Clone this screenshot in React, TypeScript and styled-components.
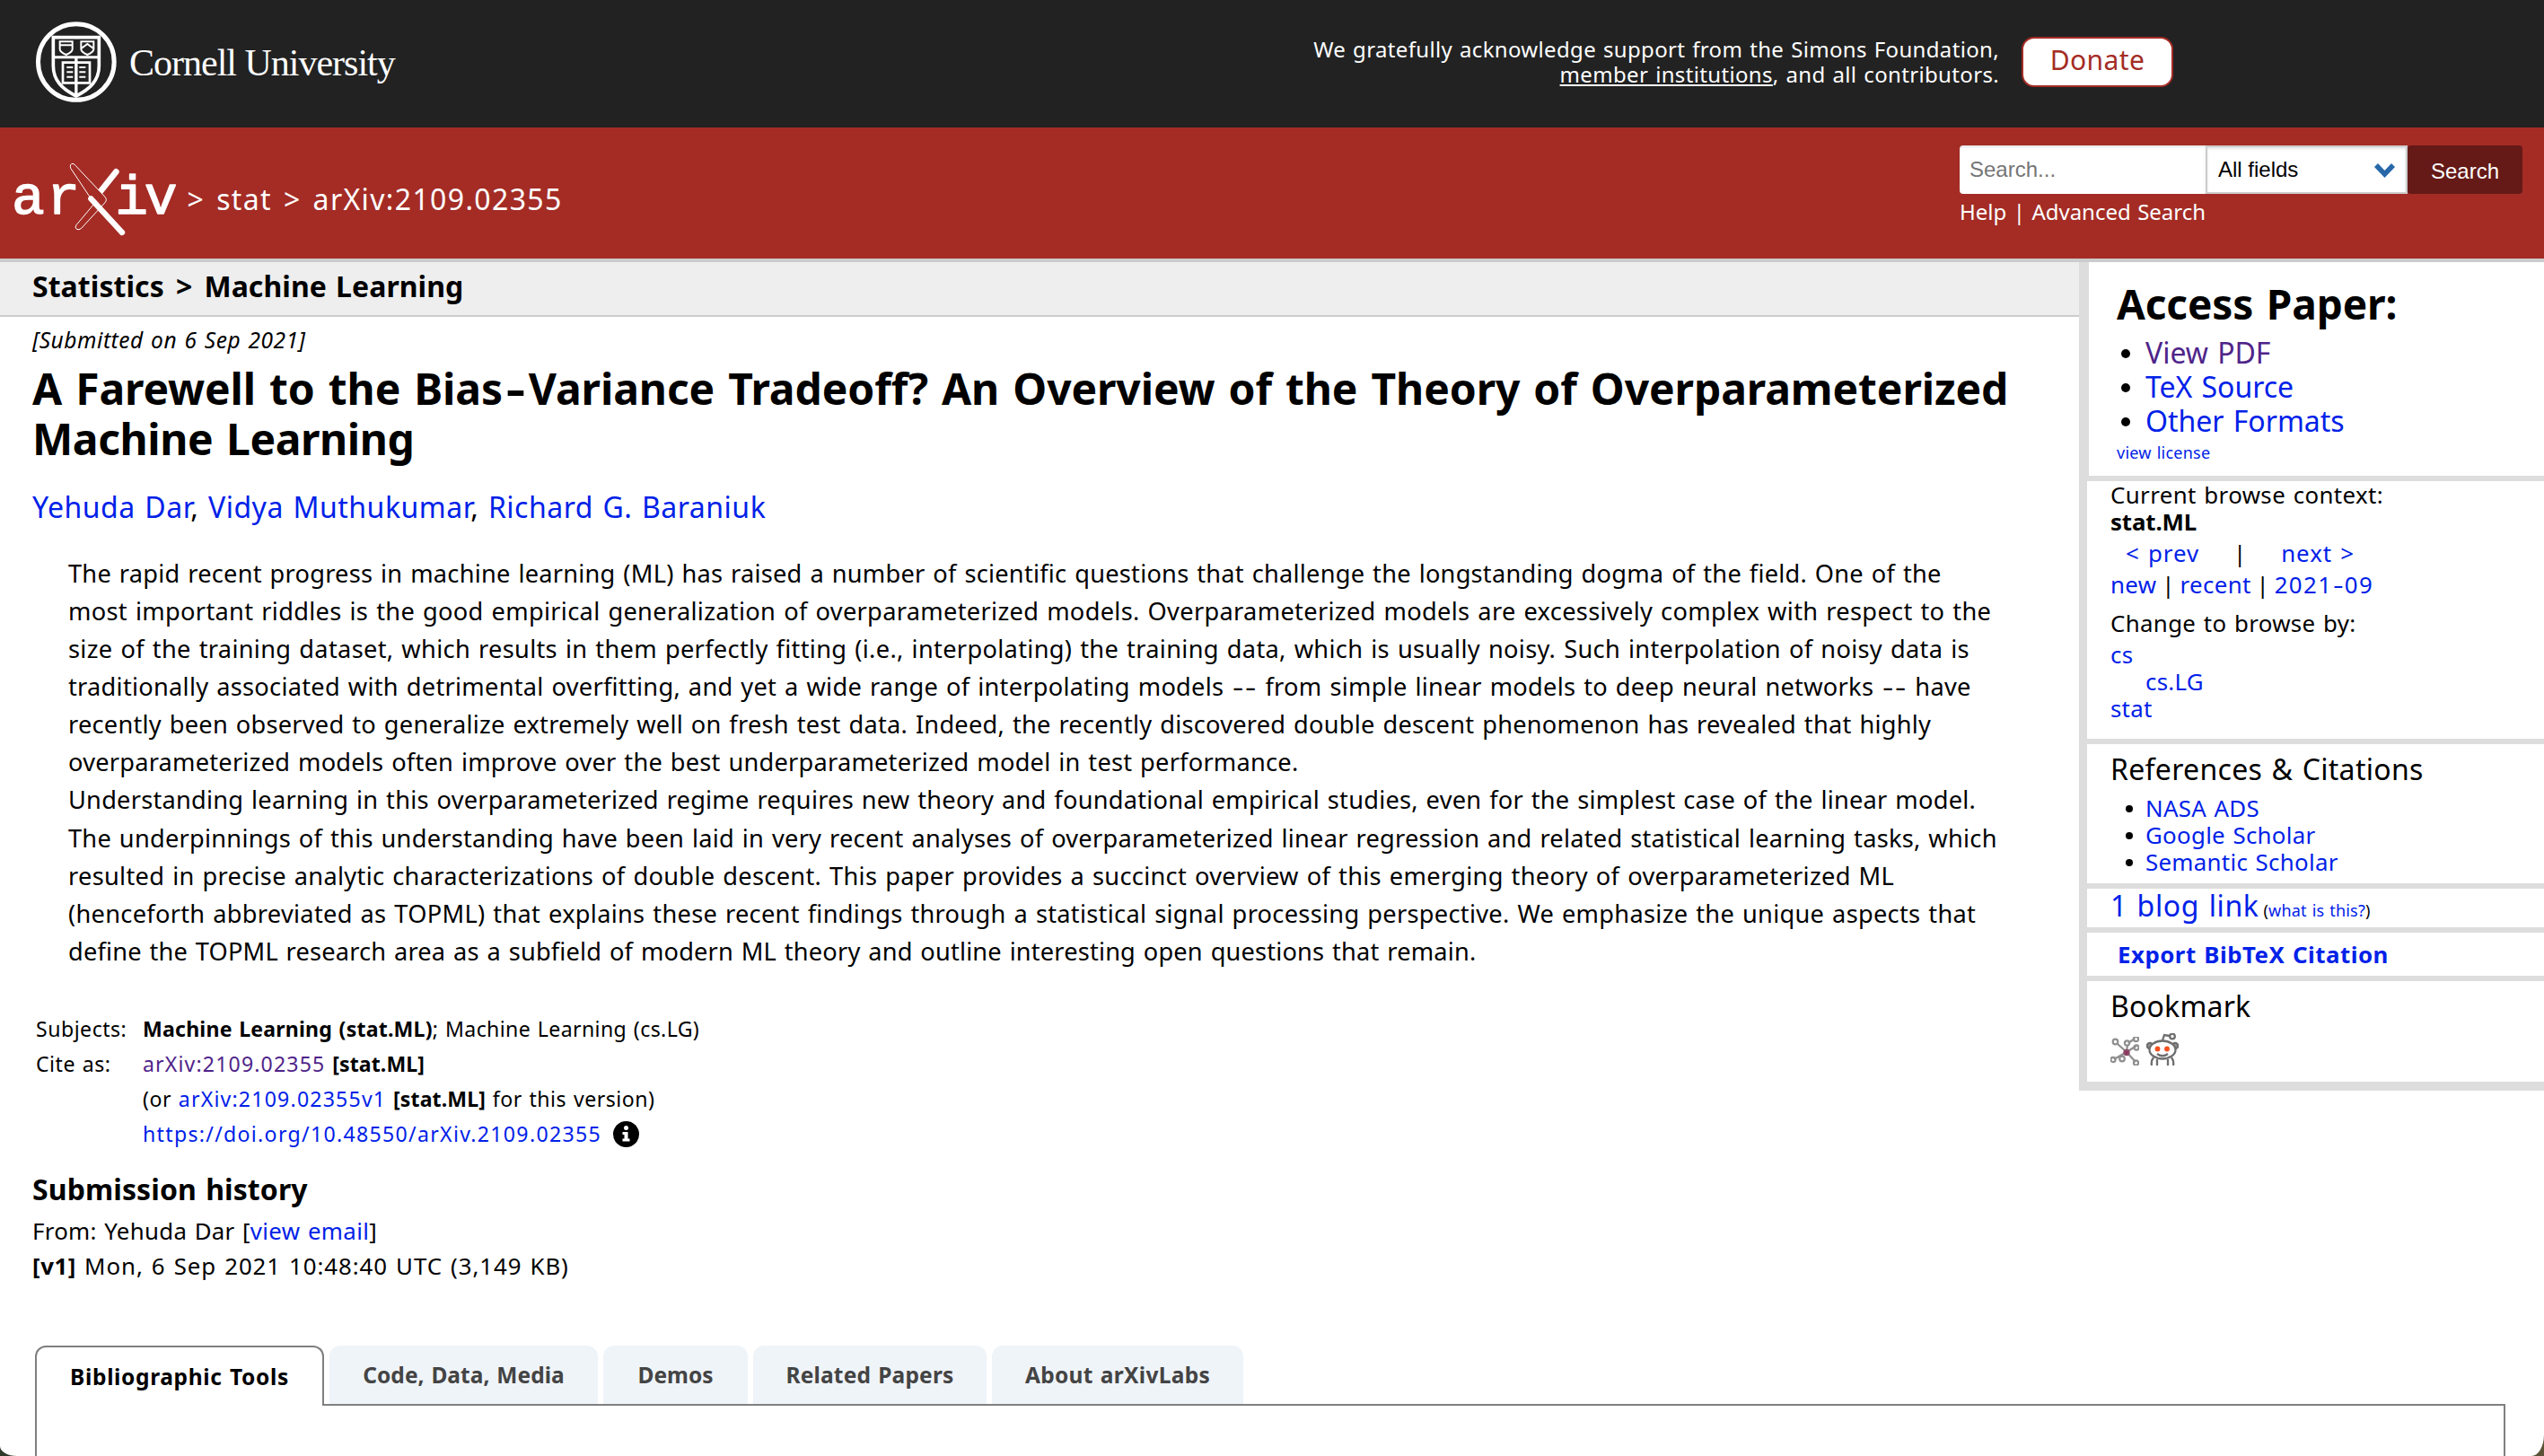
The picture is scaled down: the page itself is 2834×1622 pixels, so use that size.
import React, { Fragment } from "react";
import styled, { createGlobalStyle, css } from "styled-components";

const SANS = '"Noto Sans", "Open Sans", sans-serif';
const HELV = '"Liberation Sans", Arial, sans-serif';
const LINK = "#0021e8";
const VISITED = "#4f2489";
const RED = "#a42c25";

const GlobalStyle = createGlobalStyle`
  html, body { margin: 0; padding: 0; }
  body {
    overflow: hidden;
    background: linear-gradient(90deg, #2f3a2b 0 50%, #5b5238 50% 100%);
  }
  *, *::before, *::after { box-sizing: border-box; }
  :where(#root *) { word-spacing: 0.056em; }
`;

const Page = styled.div`
  width: 2834px;
  height: 1622px;
  overflow: hidden;
  display: flex;
  flex-direction: column;
  background: #fff;
  color: #000;
  font-family: ${SANS};
  border-bottom-left-radius: 19px 11px;
  border-bottom-right-radius: 14px 24px;
`;

interface TextProps {
  $ls?: number;
}
const tracking = css<TextProps>`
  letter-spacing: ${(p) => p.$ls ?? 0.25}px;
`;

const Link = styled.a<TextProps & { $visited?: boolean }>`
  color: ${(p) => (p.$visited ? VISITED : LINK)};
  text-decoration: none;
  ${(p) => p.$ls !== undefined && tracking}
`;

const Run = styled.span<TextProps>`
  ${tracking}
`;

const Strong = styled.b<TextProps>`
  font-weight: 700;
  ${tracking}
`;

const WideHyphen = styled.span<{ $pad: number }>`
  display: inline-block;
  padding: 0 ${(p) => p.$pad}em;
  letter-spacing: 0;
  transform: scaleX(1.4);
`;

const Dashed = ({ text, pad = 0.1 }: { text: string; pad?: number }) => (
  <>
    {text.split("-").map((part, i) => (
      <Fragment key={i}>
        {i > 0 && <WideHyphen $pad={pad}>-</WideHyphen>}
        {part}
      </Fragment>
    ))}
  </>
);

/* ---------- Cornell header ---------- */

const CornellBar = styled.header`
  flex: none;
  height: 142px;
  padding: 10px 413px 0 20px;
  display: flex;
  justify-content: space-between;
  background: #222;
  color: #fff;
`;

const CornellBrand = styled.div`
  display: flex;
  gap: 4px;
`;

const CornellName = styled.div`
  padding-top: 36px;
  font: 400 42px/48px "Liberation Serif", "Times New Roman", serif;
  letter-spacing: -1px;
  word-spacing: 0;
  white-space: nowrap;
`;

const Support = styled.div`
  display: flex;
  gap: 25px;
  padding-top: 31px;
`;

const SupportText = styled.div`
  text-align: right;
  font-size: 24px;
  line-height: 28px;
  letter-spacing: 0.34px;
  a {
    color: #fff;
    text-decoration: underline;
    text-decoration-thickness: 2px;
    text-underline-offset: 2px;
    text-decoration-skip-ink: none;
  }
`;

const Donate = styled.a`
  width: 169px;
  height: 56px;
  border: 2px solid ${RED};
  border-radius: 14px;
  background: #fff;
  color: ${RED};
  text-align: center;
  font-size: 30px;
  line-height: 47px;
  letter-spacing: 0.4px;
`;

/* ---------- arXiv header ---------- */

const ArxivBar = styled.div`
  flex: none;
  height: 150px;
  padding: 20px 24px 0 0;
  display: flex;
  justify-content: space-between;
  background: ${RED};
  border-bottom: 4px solid #cbcbcb;
  color: #fff;
`;

const Brand = styled.div`
  display: flex;
  gap: 7px;
  padding-top: 8px;
`;

const BrandPath = styled.div`
  padding-top: 33px;
  font-size: 32px;
  line-height: 38px;
  white-space: pre;
  letter-spacing: 1.36px;
`;

const Angle = styled.span<{ $gap: number }>`
  padding: 0 ${(p) => p.$gap}px;
`;

const SearchArea = styled.div`
  width: 627px;
  display: flex;
  flex-direction: column;
  gap: 6px;
`;

const SearchRow = styled.div`
  display: flex;
  height: 54px;
`;

const SearchInput = styled.input`
  width: 274px;
  height: 54px;
  border: 0;
  border-radius: 4px 0 0 4px;
  padding: 0 11px;
  background: #fff;
  box-shadow: inset 0 2px 3px rgba(10, 10, 10, 0.1);
  font: 24px ${HELV};
  &::placeholder {
    color: #757575;
    opacity: 1;
  }
`;

const FieldSelect = styled.div`
  width: 225px;
  height: 54px;
  display: flex;
  align-items: center;
  justify-content: space-between;
  padding: 0 11px 1px 12px;
  border: 2px solid #ccc;
  background: #fff;
  color: #000;
  box-shadow: inset 0 2px 3px rgba(10, 10, 10, 0.1);
  font: 24px ${HELV};
  word-spacing: 0;
`;

const SearchButton = styled.button`
  width: 128px;
  height: 54px;
  padding: 4px 0 0;
  border: 0;
  border-radius: 4px;
  background: #651a17;
  color: #fff;
  font: 24px ${HELV};
`;

const SearchHelp = styled.div`
  font-size: 24px;
  line-height: 28px;
  letter-spacing: -0.03px;
`;

/* ---------- article ---------- */

const Columns = styled.div`
  display: flex;
  align-items: flex-start;
  height: 1207px;
`;

const Main = styled.main`
  width: 2316px;
  flex: none;
`;

const Crumbs = styled.div`
  height: 61px;
  padding-left: 36px;
  background: #eee;
  border-bottom: 2px solid #ccc;
  font-weight: 700;
  font-size: 32px;
  line-height: 54px;
  letter-spacing: 0.05px;
`;

const Content = styled.div`
  padding: 11px 0 0 36px;
`;

const Dateline = styled.div`
  font-style: italic;
  font-size: 24.5px;
  line-height: 30px;
  letter-spacing: 0.55px;
`;

const Title = styled.h1`
  margin: 11px 0 0;
  font-size: 48px;
  line-height: 56px;
  font-weight: 700;
`;

const TitleLine = styled.div<TextProps>`
  white-space: nowrap;
  ${tracking}
`;

const Authors = styled.div`
  margin-top: 29px;
  font-size: 32px;
  line-height: 38px;
  letter-spacing: 0.5px;
`;

const Abstract = styled.div`
  margin: 33.5px 0 0 40px;
  font-size: 27.2px;
  line-height: 42.16px;
`;

const AbstractLine = styled.div<TextProps>`
  height: 42.16px;
  white-space: nowrap;
  ${tracking}
`;

const Meta = styled.div`
  margin: 46px 0 0 4px;
  display: grid;
  grid-template-columns: 119px 1fr;
  grid-auto-rows: 39px;
  font-size: 23.1px;
  line-height: 39px;
  letter-spacing: 0.5px;
`;

const MetaValue = styled.div`
  grid-column: 2;
  white-space: pre;
`;

const InfoIcon = styled.svg`
  margin-left: 13px;
  vertical-align: -6px;
`;

const HistoryTitle = styled.h2`
  margin: 22.5px 0 8px;
  font-size: 32px;
  line-height: 38px;
  letter-spacing: 0.1px;
`;

const HistoryLine = styled.div`
  font-size: 25.84px;
  line-height: 39.2px;
  white-space: pre;
`;

/* ---------- sidebar ---------- */

const Sidebar = styled.aside`
  flex: 1;
  border-left: 9px solid #ddd;
  border-bottom: 4px solid #ddd;
  font-size: 25.84px;
  line-height: 30px;
`;

const Box = styled.section<{ $h: number; $top?: number }>`
  height: ${(p) => p.$h}px;
  padding: ${(p) => p.$top ?? 0}px 0 0 26px;
  border-bottom: 6px solid #ddd;
`;

const AccessBox = styled(Box)`
  padding-left: 31px;
  border-left: 2px solid #ddd;
`;

const AccessTitle = styled.h2`
  margin: 0 0 9px;
  font-size: 46px;
  line-height: 54px;
  letter-spacing: -0.1px;
`;

const List = styled.ul<{ $large?: boolean }>`
  list-style: none;
  margin: 0;
  padding: 0;
  font-size: ${(p) => (p.$large ? 32 : 25.84)}px;
  line-height: ${(p) => (p.$large ? 38 : 30)}px;
  letter-spacing: ${(p) => (p.$large ? 0 : 0.3)}px;
`;

const Item = styled.li<{ $dot: number; $before: number; $after: number }>`
  display: flex;
  align-items: center;
  gap: ${(p) => p.$after}px;
  &::before {
    content: "";
    width: ${(p) => p.$dot}px;
    height: ${(p) => p.$dot}px;
    margin: 2px 0 0 ${(p) => p.$before}px;
    border-radius: 50%;
    background: #000;
  }
`;

const SmallLine = styled.div`
  margin-top: 4px;
  font-size: 18px;
  line-height: 24px;
  letter-spacing: 0.25px;
`;

const SideLine = styled.div<TextProps & { $mt?: number; $indent?: number }>`
  margin: ${(p) => p.$mt ?? 0}px 0 0 ${(p) => p.$indent ?? 0}px;
  height: 30px;
  white-space: pre;
  ${tracking}
`;

const ListingLinks = styled(SideLine)`
  word-spacing: -1.5px;
`;

const PrevNext = styled.div`
  margin-top: 5px;
  padding-left: 17px;
  display: flex;
  letter-spacing: 1px;
`;

const Separator = styled.span`
  width: 91px;
  text-align: center;
`;

const SideHeading = styled.h3<TextProps>`
  margin: 0 0 9px;
  font-weight: 400;
  font-size: 32px;
  line-height: 38px;
  ${tracking}
`;

const BlogLine = styled.div`
  display: flex;
  align-items: baseline;
  font-size: 32px;
  line-height: 37px;
  letter-spacing: 0.6px;
`;

const WhatIsThis = styled.span`
  margin-left: 5px;
  font-size: 18px;
  letter-spacing: 0.2px;
`;

const ExportLink = styled.div`
  padding-left: 8px;
  font-weight: 700;
  line-height: 48px;
  letter-spacing: 0.5px;
`;

const Bookmarks = styled.div`
  display: flex;
  align-items: flex-end;
  gap: 8px;
  margin-top: 11px;
  height: 36px;
`;

/* ---------- tabs ---------- */

const Labs = styled.section`
  flex: 1;
  display: flex;
  flex-direction: column;
  padding: 0 43px 0 39px;
`;

const TabRow = styled.div`
  display: flex;
  gap: 6px;
  height: 65px;
`;

const Tab = styled.div<TextProps & { $w: number; $active?: boolean }>`
  width: ${(p) => p.$w}px;
  height: 65px;
  border-radius: 12px 12px 0 0;
  background: #eff4f9;
  color: #444;
  font-weight: 700;
  font-size: 24.5px;
  line-height: 66px;
  text-align: center;
  white-space: nowrap;
  ${tracking}
  ${(p) =>
    p.$active &&
    css`
      position: relative;
      height: 67px;
      background: #fff;
      color: #000;
      border: 2px solid #808080;
      border-bottom: 0;
    `}
`;

const TabPanel = styled.div`
  flex: 1;
  border: 2px solid #808080;
  border-bottom: 0;
`;

const Seal = () => (
  <svg width="120" height="120" viewBox="0 0 360 360" fill="none" stroke="#fff">
    <circle cx="194.500" cy="177" r="127" strokeWidth="15" />
    <path d="M118 95H271V190C271 240 240 268 194.500 291C149 268 118 240 118 190Z" strokeWidth="11" />
    <path d="M118 161H271" strokeWidth="9" />
    <path d="M194.500 161V288" strokeWidth="10" />
    <path d="M150 179H240V247H150Z" strokeWidth="8" />
    <path d="M140 109H182V134C182 143 172 148 161 153C150 148 140 143 140 134ZM140 121H182" strokeWidth="6" />
    <path d="M211 109H253V134C253 143 243 148 232 153C221 148 211 143 211 134ZM213 131L232 117L251 131" strokeWidth="6" />
    <path d="M163 195H184M163 211H184M163 227H184M205 195H226M205 211H226M205 227H226" strokeWidth="6" />
  </svg>
);

const ArxivLogo = () => (
  <svg width="200" height="100" viewBox="0 0 600 300">
    <text
      x="39 157 385 482"
      y="205"
      fontFamily='"Liberation Mono", monospace'
      fontSize="184"
      fill="#fff"
      stroke="#fff"
      strokeWidth="4"
      strokeLinejoin="round"
    >
      ariv
    </text>
    <g fill="none" strokeLinecap="round">
      <path d="M388 64L334 132" stroke="#fff" strokeWidth="20" />
      <path
        d="M300 148L236 52Q232 38 243 37Q249 38 253 44L350 147Q360 158 350 168L272 253Q264 260 256 256Q249 250 255 242L314 172"
        fill={RED}
        stroke="#fff"
        strokeWidth="3"
      />
      <path d="M304 154L408 267" stroke="#fff" strokeWidth="19" />
    </g>
  </svg>
);

const ScienceWise = () => (
  <svg width="32" height="32" viewBox="0 0 32 32" fill="none" stroke="#8f8f8f" strokeWidth="2.200">
    <path d="M8 8L18 17M18 17L28 28M18 17L4 25M18 17L19 9M18 17L29 10M20 7L27 2" />
    <circle cx="5.500" cy="5.500" r="2.800" />
    <circle cx="18.500" cy="7" r="2.600" />
    <circle cx="28.500" cy="2.500" r="2.600" />
    <circle cx="29" cy="12" r="2.600" />
    <circle cx="3" cy="25.500" r="2.600" />
    <circle cx="13" cy="24.500" r="2.800" />
    <circle cx="28.500" cy="29" r="2.600" />
    <circle cx="18" cy="17.500" r="2.600" fill="#8c2f5a" stroke="#8c4a68" />
  </svg>
);

const Reddit = () => (
  <svg width="36" height="36" viewBox="0 0 36 36" fill="none" stroke="#6e6e6e" strokeWidth="2.300">
    <path d="M8 27Q5 31 6 36M12 29V36M28 27Q31 31 30 36M24 29V36" />
    <circle cx="4" cy="14" r="3.200" fill="#999" />
    <circle cx="32" cy="14" r="3.200" fill="#999" />
    <ellipse cx="18" cy="18.500" rx="14.500" ry="10" fill="#fff" />
    <path d="M18 8L20 2L26 3M12 23Q18 27.500 24 23" />
    <circle cx="29" cy="3.500" r="2.800" />
    <circle cx="12.500" cy="17.500" r="2.900" fill="#f4511e" stroke="none" />
    <circle cx="23" cy="17.500" r="2.900" fill="#f4511e" stroke="none" />
  </svg>
);

const abstractLines: [string, number][] = [
  ["The rapid recent progress in machine learning (ML) has raised a number of scientific questions that challenge the longstanding dogma of the field. One of the", 0.245],
  ["most important riddles is the good empirical generalization of overparameterized models. Overparameterized models are excessively complex with respect to the", 0.325],
  ["size of the training dataset, which results in them perfectly fitting (i.e., interpolating) the training data, which is usually noisy. Such interpolation of noisy data is", 0.33],
  ["traditionally associated with detrimental overfitting, and yet a wide range of interpolating models -- from simple linear models to deep neural networks -- have", 0.28],
  ["recently been observed to generalize extremely well on fresh test data. Indeed, the recently discovered double descent phenomenon has revealed that highly", 0.25],
  ["overparameterized models often improve over the best underparameterized model in test performance.", 0.235],
  ["Understanding learning in this overparameterized regime requires new theory and foundational empirical studies, even for the simplest case of the linear model.", 0.24],
  ["The underpinnings of this understanding have been laid in very recent analyses of overparameterized linear regression and related statistical learning tasks, which", 0.257],
  ["resulted in precise analytic characterizations of double descent. This paper provides a succinct overview of this emerging theory of overparameterized ML", 0.314],
  ["(henceforth abbreviated as TOPML) that explains these recent findings through a statistical signal processing perspective. We emphasize the unique aspects that", 0.297],
  ["define the TOPML research area as a subfield of modern ML theory and outline interesting open questions that remain.", 0.186],
];

const tabs: { label: string; w: number; ls: number; active?: boolean }[] = [
  { label: "Bibliographic Tools", w: 322, ls: 0.65, active: true },
  { label: "Code, Data, Media", w: 299, ls: 0.05 },
  { label: "Demos", w: 161, ls: 0 },
  { label: "Related Papers", w: 260, ls: 0.2 },
  { label: "About arXivLabs", w: 280, ls: 0.3 },
];

export default function App() {
  return (
    <Page>
      <GlobalStyle />
      <CornellBar>
        <CornellBrand>
          <Seal />
          <CornellName>Cornell University</CornellName>
        </CornellBrand>
        <Support>
          <SupportText>
            We gratefully acknowledge support from the Simons Foundation,
            <br />
            <a>member institutions</a>, and all contributors.
          </SupportText>
          <Donate>Donate</Donate>
        </Support>
      </CornellBar>

      <ArxivBar>
        <Brand>
          <ArxivLogo />
          <BrandPath>
            <Angle $gap={1.5}>&gt;</Angle> stat <Angle $gap={1.5}>&gt;</Angle> arXiv:2109.02355
          </BrandPath>
        </Brand>
        <SearchArea>
          <SearchRow>
            <SearchInput placeholder="Search..." />
            <FieldSelect>
              All fields
              <svg width="25" height="18" viewBox="0 0 25 18">
                <path d="M3 4L12.500 14L22 4" fill="none" stroke="#2868a8" strokeWidth="5.500" />
              </svg>
            </FieldSelect>
            <SearchButton>Search</SearchButton>
          </SearchRow>
          <SearchHelp>Help | Advanced Search</SearchHelp>
        </SearchArea>
      </ArxivBar>

      <Columns>
        <Main>
          <Crumbs>
            Statistics <Angle $gap={3}>&gt;</Angle> Machine Learning
          </Crumbs>
          <Content>
            <Dateline>[Submitted on 6 Sep 2021]</Dateline>
            <Title>
              <TitleLine $ls={-0.1}>
                <Dashed
                  text="A Farewell to the Bias-Variance Tradeoff? An Overview of the Theory of Overparameterized"
                  pad={0.14}
                />
              </TitleLine>
              <TitleLine $ls={-0.42}>Machine Learning</TitleLine>
            </Title>
            <Authors>
              <Link>Yehuda Dar</Link>, <Link>Vidya Muthukumar</Link>, <Link>Richard G. Baraniuk</Link>
            </Authors>
            <Abstract>
              {abstractLines.map(([text, ls]) => (
                <AbstractLine key={text} $ls={ls}>
                  <Dashed text={text} />
                </AbstractLine>
              ))}
            </Abstract>
            <Meta>
              <div>Subjects:</div>
              <MetaValue>
                <Strong $ls={0.2}>Machine Learning (stat.ML)</Strong>
                <Run $ls={0.38}>; Machine Learning (cs.LG)</Run>
              </MetaValue>
              <div>Cite as:</div>
              <MetaValue>
                <Link $visited $ls={1.15}>arXiv:2109.02355</Link> <Strong $ls={0.1}>[stat.ML]</Strong>
              </MetaValue>
              <MetaValue>
                (or <Link $ls={1.2}>arXiv:2109.02355v1</Link> <Strong $ls={0.1}>[stat.ML]</Strong> for this version)
              </MetaValue>
              <MetaValue>
                <Link $ls={1.31}>https://doi.org/10.48550/arXiv.2109.02355</Link>
                <InfoIcon width="29" height="29" viewBox="0 0 29 29">
                  <circle cx="14.500" cy="14.500" r="14.500" fill="#000" />
                  <circle cx="14.500" cy="7.500" r="2.500" fill="#fff" />
                  <path d="M10.500 12H16.500V19.500H18.500V22.500H10.500V19.500H12.500V15H10.500Z" fill="#fff" />
                </InfoIcon>
              </MetaValue>
            </Meta>
            <HistoryTitle>Submission history</HistoryTitle>
            <HistoryLine>
              <Run $ls={0.3}>From: Yehuda Dar [</Run>
              <Link $ls={0.35}>view email</Link>]
            </HistoryLine>
            <HistoryLine>
              <Strong $ls={0.6}>[v1]</Strong>
              <Run $ls={0.93}> Mon, 6 Sep 2021 10:48:40 UTC (3,149 KB)</Run>
            </HistoryLine>
          </Content>
        </Main>

        <Sidebar>
          <AccessBox $h={244} $top={19}>
            <AccessTitle>Access Paper:</AccessTitle>
            <List $large>
              <Item $dot={10} $before={5} $after={17}>
                <Link $visited>View PDF</Link>
              </Item>
              <Item $dot={10} $before={5} $after={17}>
                <Link>TeX Source</Link>
              </Item>
              <Item $dot={10} $before={5} $after={17}>
                <Link>Other Formats</Link>
              </Item>
            </List>
            <SmallLine>
              <Link>view license</Link>
            </SmallLine>
          </AccessBox>
          <Box $h={293}>
            <SideLine $ls={0.4}>Current browse context:</SideLine>
            <SideLine $ls={-0.1}>
              <b>stat.ML</b>
            </SideLine>
            <PrevNext>
              <Link>&lt; prev</Link>
              <Separator>|</Separator>
              <Link>next &gt;</Link>
            </PrevNext>
            <ListingLinks $mt={5} $ls={0.4}>
              <Link>new</Link> | <Link>recent</Link> |{" "}
              <Link $ls={1.4}>
                <Dashed text="2021-09" />
              </Link>
            </ListingLinks>
            <SideLine $mt={13} $ls={0.35}>Change to browse by:</SideLine>
            <SideLine $mt={5}>
              <Link>cs</Link>
            </SideLine>
            <SideLine $indent={39}>
              <Link>cs.LG</Link>
            </SideLine>
            <SideLine>
              <Link>stat</Link>
            </SideLine>
          </Box>
          <Box $h={161} $top={9}>
            <SideHeading $ls={0.3}>References &amp; Citations</SideHeading>
            <List>
              <Item $dot={8} $before={17} $after={14}>
                <Link>NASA ADS</Link>
              </Item>
              <Item $dot={8} $before={17} $after={14}>
                <Link>Google Scholar</Link>
              </Item>
              <Item $dot={8} $before={17} $after={14}>
                <Link>Semantic Scholar</Link>
              </Item>
            </List>
          </Box>
          <Box $h={49}>
            <BlogLine>
              <Link>1 blog link</Link>
              <WhatIsThis>
                (<Link>what is this?</Link>)
              </WhatIsThis>
            </BlogLine>
          </Box>
          <Box $h={54}>
            <ExportLink>
              <Link>Export BibTeX Citation</Link>
            </ExportLink>
          </Box>
          <Box $h={118} $top={9}>
            <SideHeading $ls={0.2}>Bookmark</SideHeading>
            <Bookmarks>
              <ScienceWise />
              <Reddit />
            </Bookmarks>
          </Box>
        </Sidebar>
      </Columns>

      <Labs>
        <TabRow>
          {tabs.map((t) => (
            <Tab key={t.label} $w={t.w} $ls={t.ls} $active={t.active}>
              {t.label}
            </Tab>
          ))}
        </TabRow>
        <TabPanel />
      </Labs>
    </Page>
  );
}
